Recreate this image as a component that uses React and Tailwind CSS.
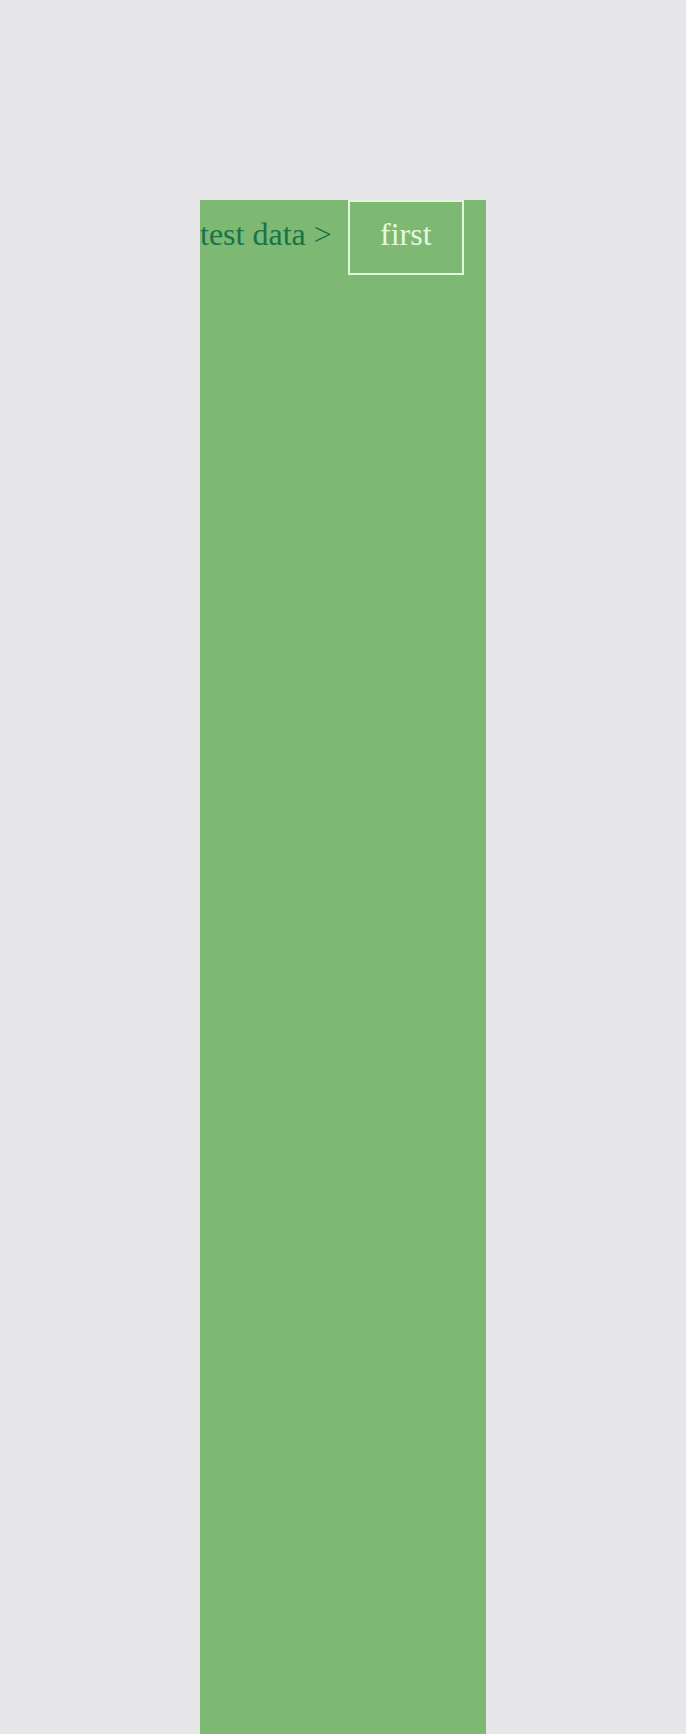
export default function App() {
  return (
    <div className="min-h-[1734px] bg-[#e7e7e9] pt-[200px] pl-[200px]" style={{ fontFamily: '"Liberation Serif", "Times New Roman", serif' }}>
      <div className="w-[286px] min-h-[1534px] bg-[#7db973]">
        <div className="flex items-baseline">
          <span className="text-[32px] leading-[36px] text-[#1a7249]">test data &gt;</span>
          <div className="ml-4 h-[75px] w-[116px] border-2 border-[#e2f8dc] pt-[14px] text-center text-[32px] leading-[36px] text-[#e4f9de]">
            first
          </div>
        </div>
      </div>
    </div>
  );
}
